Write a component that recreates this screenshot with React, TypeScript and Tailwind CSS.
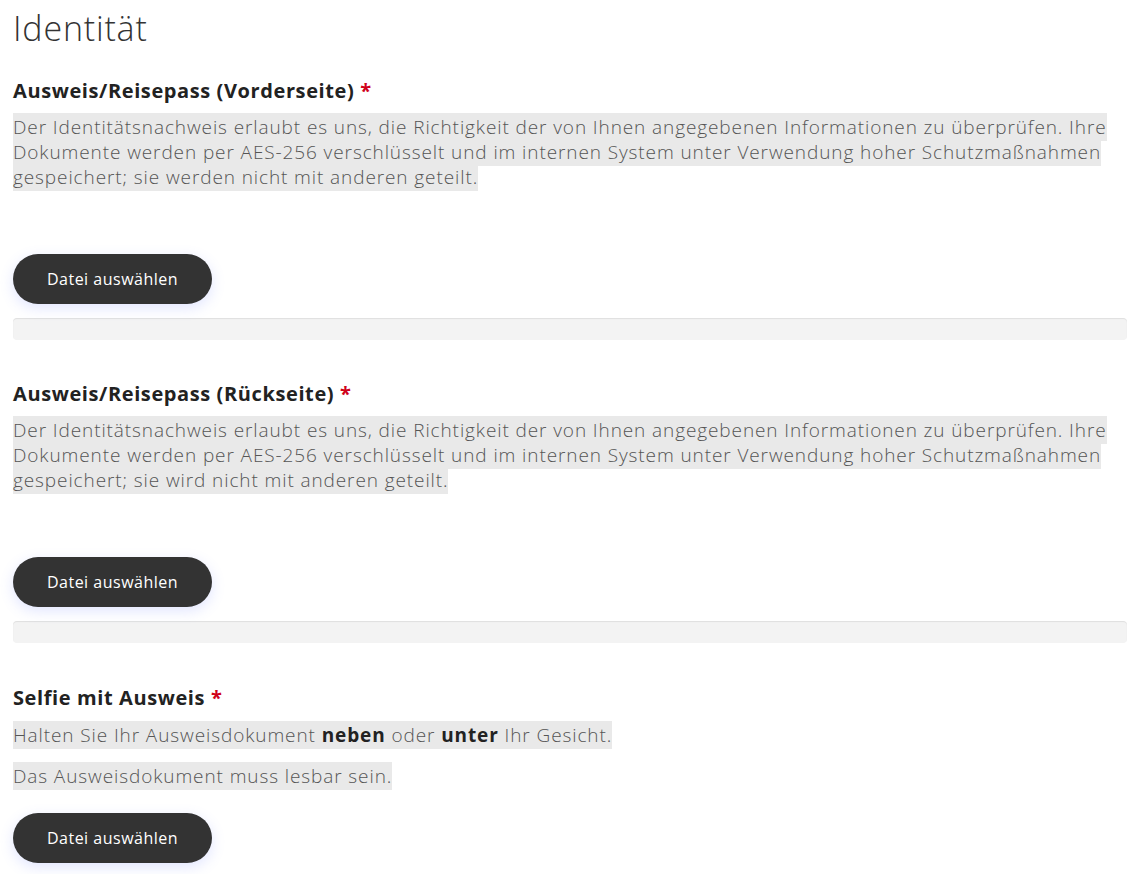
import React from 'react';

const FONT = { fontFamily: '"Open Sans", "Liberation Sans", sans-serif' };

const UploadButton: React.FC = () => (
    <button
        type="button"
        className="w-[199px] h-[50px] rounded-full bg-[#333333] text-white text-[16px] tracking-[0.5px] shadow-[0_4px_14px_rgba(90,110,255,0.18)]"
    >
        Datei auswählen
    </button>
);

const ProgressBar: React.FC = () => (
    <div className="mt-[14px] h-[22px] w-full rounded-[4px] bg-[#f3f3f3] shadow-[inset_0_1px_1px_rgba(0,0,0,0.08)]" />
);

const Heading: React.FC<{ children: React.ReactNode }> = ({ children }) => (
    <h3 className="text-[20px] font-bold text-[#222222] tracking-[0.6px] leading-[26px]">
        {children} <span className="text-[#d0021b]">*</span>
    </h3>
);

const Mark: React.FC<{ children: React.ReactNode }> = ({ children }) => (
    <span className="bg-[#e9e9e9] py-[1px] [box-decoration-break:clone]">{children}</span>
);

const App: React.FC = () => {
    return (
        <div className="min-h-screen bg-white pl-[13px] pr-[17px] pt-[6px] text-[#555555]" style={FONT}>
            {/* Titel */}
            <h1 className="text-[34px] font-light text-[#333333] leading-[44px] tracking-[0.8px]">Identität</h1>

            {/* Vorderseite */}
            <section className="mt-[28px]">
                <Heading>Ausweis/Reisepass (Vorderseite)</Heading>
                <p className="mt-[11px] text-[19px] font-light leading-[25px] tracking-[0.9px]">
                    <Mark>
                        Der Identitätsnachweis erlaubt es uns, die Richtigkeit der von Ihnen angegebenen Informationen zu überprüfen. Ihre
                        <br />
                        Dokumente werden per AES-256 verschlüsselt und im internen System unter Verwendung hoher Schutzmaßnahmen
                        <br />
                        gespeichert; sie werden nicht mit anderen geteilt.
                    </Mark>
                </p>
                <div className="mt-[64px]">
                    <UploadButton />
                </div>
                <ProgressBar />
            </section>

            {/* Rückseite */}
            <section className="mt-[41px]">
                <Heading>Ausweis/Reisepass (Rückseite)</Heading>
                <p className="mt-[11px] text-[19px] font-light leading-[25px] tracking-[0.9px]">
                    <Mark>
                        Der Identitätsnachweis erlaubt es uns, die Richtigkeit der von Ihnen angegebenen Informationen zu überprüfen. Ihre
                        <br />
                        Dokumente werden per AES-256 verschlüsselt und im internen System unter Verwendung hoher Schutzmaßnahmen
                        <br />
                        gespeichert; sie wird nicht mit anderen geteilt.
                    </Mark>
                </p>
                <div className="mt-[64px]">
                    <UploadButton />
                </div>
                <ProgressBar />
            </section>

            {/* Selfie */}
            <section className="mt-[42px]">
                <Heading>Selfie mit Ausweis</Heading>
                <p className="mt-[12px] text-[19px] font-light leading-[25px] tracking-[0.9px]">
                    <Mark>
                        Halten Sie Ihr Ausweisdokument <b className="font-bold text-[#222222]">neben</b> oder{' '}
                        <b className="font-bold text-[#222222]">unter</b> Ihr Gesicht.
                    </Mark>
                </p>
                <p className="mt-[16px] text-[19px] font-light leading-[25px] tracking-[0.9px]">
                    <Mark>Das Ausweisdokument muss lesbar sein.</Mark>
                </p>
                <div className="mt-[24px]">
                    <UploadButton />
                </div>
            </section>
        </div>
    );
};

export default App;
